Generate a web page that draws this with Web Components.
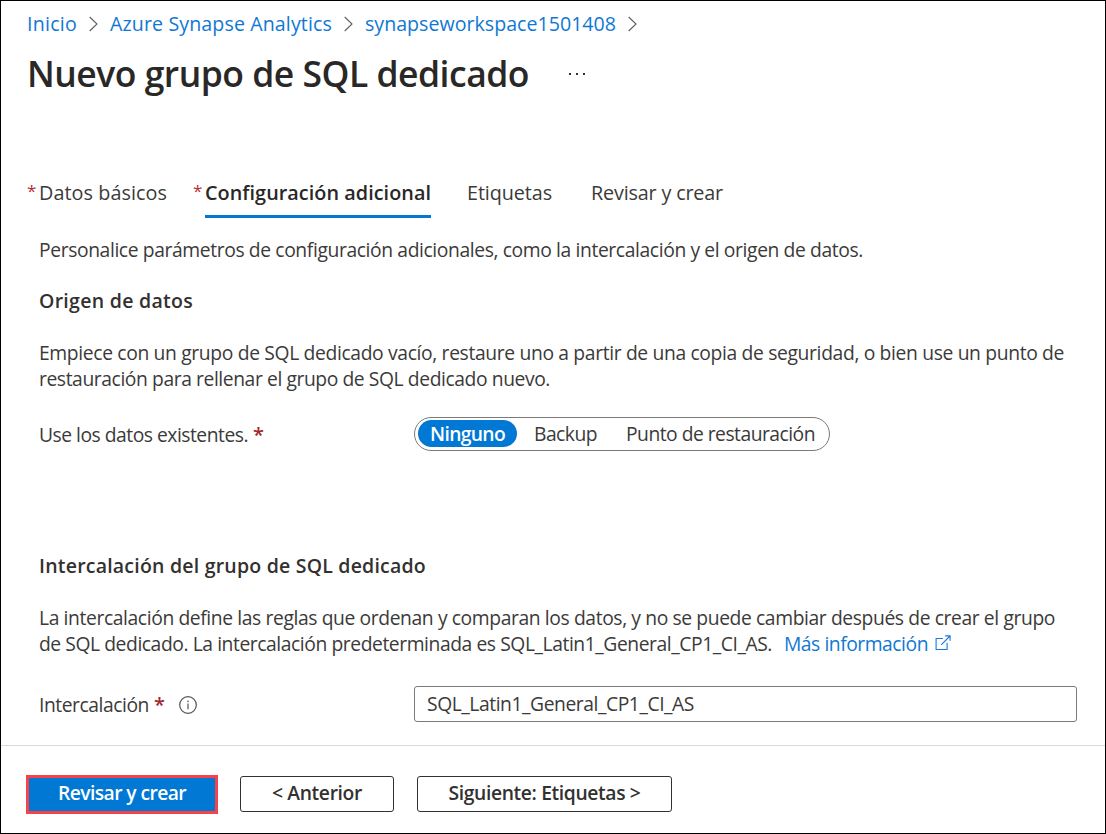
<!DOCTYPE html>
<html lang="es">
<head>
<meta charset="utf-8">
<title>Nuevo grupo de SQL dedicado</title>
<style>
html,body{margin:0;height:100%;background:#fff}
body{font-family:"Open Sans","Noto Sans",sans-serif;font-size:19.3px;line-height:26px;color:#3b3a39}
</style>
</head>
<body>
<azure-blade></azure-blade>
<script>
const define = (name, css, html, init) => {
  const tpl = document.createElement('template');
  tpl.innerHTML = `<style>${css}</style>${html}`;
  customElements.define(name, class extends HTMLElement {
    constructor() {
      super();
      this.attachShadow({mode: 'open'}).append(tpl.content.cloneNode(true));
    }
    connectedCallback() { if (init) init(this, this.shadowRoot); }
  });
};

/* One line of text, tracked so that it fills the width in its "w" attribute. */
define('text-line', `
  :host{display:block;white-space:nowrap;flex:none}
  span{display:inline-block}`,
  `<span><slot></slot></span>`, (el, root) => {
    const w = parseFloat(el.getAttribute('w'));
    if (!w) return;
    const span = root.querySelector('span');
    el.style.width = w + 'px';
    const natural = span.getBoundingClientRect().width;
    const n = el.textContent.length;
    if (natural) span.style.letterSpacing = ((w - natural) / n).toFixed(4) + 'px';
  });

define('chevron-icon', `:host{display:block;flex:none;width:9px;height:16px}svg{display:block}`,
  `<svg width="9" height="16" viewBox="0 0 9 16" fill="none" stroke="#605e5c" stroke-width="1.1"><path d="M.7 1 8 8 .7 15"/></svg>`);

define('info-icon', `:host{display:block;flex:none;width:18px;height:18px}svg{display:block}`,
  `<svg width="18" height="18" viewBox="0 0 18 18"><circle cx="9" cy="9" r="8.3" fill="none" stroke="#55534f" stroke-width="1.2"/><path d="M9 7.4V13.2" stroke="#55534f" stroke-width="1.2"/><rect x="8.3" y="4.7" width="1.4" height="1.4" fill="#55534f"/></svg>`);

define('external-icon', `:host{display:block;flex:none;width:16px;height:16px;margin-top:-2px}svg{display:block}`,
  `<svg width="16" height="16" viewBox="0 0 16 16" fill="none" stroke="#1b78e0" stroke-width="1.1"><path d="M8 3.5H1.1V14.5H12.1V7.8M10.2.9H15.1V5.8M15 1 6.2 9.8"/></svg>`);

define('more-dots', `
  :host{display:flex;gap:5px;flex:none}
  i{width:2px;height:2px;background:#323130}`, `<i></i><i></i><i></i>`);

define('bread-crumb', `
  :host{display:flex;align-items:center;height:26px;padding-left:26px;color:#0f78d4;font-size:19.6px}
  chevron-icon{margin:0 12px 0 12px}`,
  `<text-line w="50">Inicio</text-line><chevron-icon></chevron-icon>
   <text-line w="222">Azure Synapse Analytics</text-line><chevron-icon></chevron-icon>
   <text-line w="251">synapseworkspace1501408</text-line><chevron-icon></chevron-icon>`);

define('blade-title', `
  :host{display:flex;align-items:center;height:48px;padding-left:26px;color:#292827}
  h1{margin:0;font-size:35.5px;font-weight:600;line-height:48px}
  more-dots{margin:1px 0 0 40px}`,
  `<h1><text-line w="502">Nuevo grupo de SQL dedicado</text-line></h1><more-dots></more-dots>`);

define('tab-item', `
  :host{display:flex;height:38px;box-sizing:border-box}
  .star{width:12px;color:#b4303a;font-size:17px;line-height:22px}
  :host(:not([required])) .star{display:none}
  .label{height:35px;border-bottom:3px solid transparent}
  :host([active]) .label{border-color:#0078d4;font-weight:600;color:#292827}`,
  `<span class="star">*</span><div class="label"><slot></slot></div>`);

define('tab-bar', `:host{display:flex;height:38px;padding-left:26px;font-size:19.8px}`,
  `<tab-item required><text-line w="128">Datos básicos</text-line></tab-item>
   <tab-item required active style="margin-left:26px"><text-line w="226">Configuración adicional</text-line></tab-item>
   <tab-item style="margin-left:36px"><text-line w="85">Etiquetas</text-line></tab-item>
   <tab-item style="margin-left:39px"><text-line w="132">Revisar y crear</text-line></tab-item>`);

define('section-title', `:host{display:block;font-size:19.5px;font-weight:600;color:#323130}`, `<slot></slot>`);

define('field-row', `
  :host{display:grid;grid-template-columns:375px auto;align-items:center;justify-content:start}
  .label{display:flex;align-items:center;padding-top:2px}
  .req{color:#a4262c;font-weight:600;margin-left:5px;font-size:20px;width:11px}`,
  `<div class="label"><slot name="label"></slot><span class="req">*</span><slot name="info"></slot></div><slot></slot>`);

define('option-item', `
  :host{display:flex;justify-content:center;align-items:center;height:27px;border-radius:14px;line-height:25px}
  :host([selected]){background:#0078d4;color:#fff;font-weight:600}`, `<slot></slot>`);

define('option-group', `
  :host{display:flex;align-items:center;box-sizing:border-box;width:416px;height:34px;border:1px solid #7d7b79;border-radius:17px;padding:0 3px 1px}`,
  `<option-item selected style="width:99px"><text-line w="75">Ninguno</text-line></option-item>
   <option-item style="margin-left:17px"><text-line w="63">Backup</text-line></option-item>
   <option-item style="margin-left:29px"><text-line w="189">Punto de restauración</text-line></option-item>`);

define('text-field', `
  :host{display:flex;align-items:center;box-sizing:border-box;width:663px;height:36px;border:1px solid #7d7b79;border-radius:3px;padding-left:12px}`,
  `<slot></slot>`);

define('info-link', `:host{display:flex;align-items:center;color:#0f78d4;gap:7px;margin-left:12px}`,
  `<slot></slot><external-icon></external-icon>`);

define('push-button', `
  :host{display:flex;justify-content:center;align-items:center;box-sizing:border-box;height:36px;border:1px solid #323130;border-radius:3px;font-weight:600;color:#323130;padding-bottom:2px}
  :host([primary]){height:39px;border:3px solid #f5424b;border-radius:0;background:#0078d4;color:#fff;padding-bottom:3px}`,
  `<slot></slot>`);

define('blade-footer', `
  :host{display:flex;align-items:flex-start;box-sizing:border-box;height:88px;border-top:1px solid #dad9d8;padding:30px 0 0 25px}
  push-button[primary]{margin-top:-1px}`,
  `<push-button primary style="width:192px"><text-line w="128">Revisar y crear</text-line></push-button>
   <push-button style="width:154px;margin-left:22px"><text-line w="90">&lt; Anterior</text-line></push-button>
   <push-button style="width:255px;margin-left:23px"><text-line w="192">Siguiente: Etiquetas &gt;</text-line></push-button>`);

define('settings-form', `
  :host{display:block;padding-left:38px}
  .row{display:flex}
  .t1{margin-top:25px}.p1{margin-top:26px}.f1{margin-top:25px}
  .t2{margin-top:102px}.p2{margin-top:26px}.f2{margin-top:29px}
  info-icon{margin-left:14px}`,
  `<text-line w="824">Personalice parámetros de configuración adicionales, como la intercalación y el origen de datos.</text-line>
   <section-title class="t1"><text-line w="154">Origen de datos</text-line></section-title>
   <div class="p1"><text-line w="1025">Empiece con un grupo de SQL dedicado vacío, restaure uno a partir de una copia de seguridad, o bien use un punto de</text-line>
   <text-line w="511">restauración para rellenar el grupo de SQL dedicado nuevo.</text-line></div>
   <field-row class="f1"><text-line slot="label" w="209">Use los datos existentes.</text-line><option-group></option-group></field-row>
   <section-title class="t2"><text-line w="387">Intercalación del grupo de SQL dedicado</text-line></section-title>
   <div class="p2"><text-line w="1016">La intercalación define las reglas que ordenan y comparan los datos, y no se puede cambiar después de crear el grupo</text-line>
   <div class="row"><text-line w="733">de SQL dedicado. La intercalación predeterminada es SQL_Latin1_General_CP1_CI_AS.</text-line><info-link><text-line w="144">Más información</text-line></info-link></div></div>
   <field-row class="f2"><text-line slot="label" w="110">Intercalación</text-line><info-icon slot="info"></info-icon><text-field><text-line w="267">SQL_Latin1_General_CP1_CI_AS</text-line></text-field></field-row>`);

define('azure-blade', `
  :host{display:flex;flex-direction:column;box-sizing:border-box;width:1106px;height:834px;border:1px solid #000;overflow:hidden;background:#fff}
  bread-crumb{margin-top:10px}
  blade-title{margin-top:12px}
  tab-bar{margin-top:83px}
  settings-form{margin-top:19px}
  blade-footer{margin-top:auto}`,
  `<bread-crumb></bread-crumb><blade-title></blade-title><tab-bar></tab-bar><settings-form></settings-form><blade-footer></blade-footer>`);
</script>
</body>
</html>
